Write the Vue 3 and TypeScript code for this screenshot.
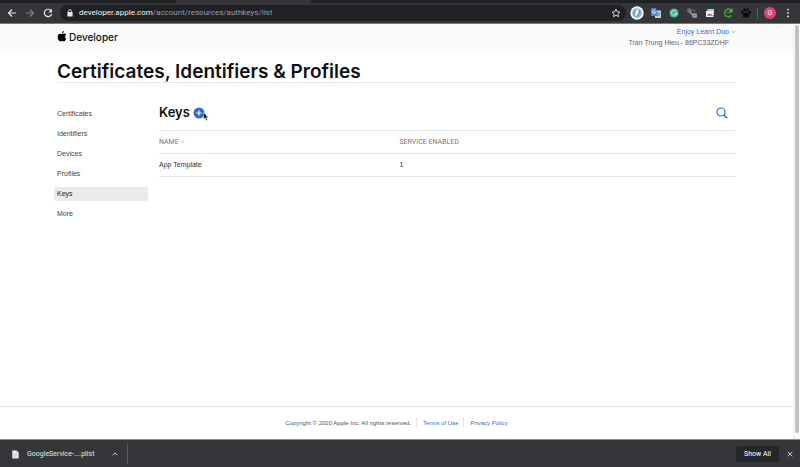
<script setup lang="ts">
interface KeyRow {
  name: string
  services: number
}

const sections: string[] = ['Certificates', 'Identifiers', 'Devices', 'Profiles', 'Keys', 'More']
const current = 'Keys'
const keys: KeyRow[] = [{ name: 'App Template', services: 1 }]
</script>

<template>
  <div class="window">
    <header class="chrome">
      <div class="tabs"><span class="tab"></span></div>
      <div class="toolbar">
        <button class="tool" type="button" aria-label="Back">
          <svg viewBox="0 0 10 10" width="10" height="10"><path d="M9 5H1.5M5 1.5L1.5 5L5 8.5" fill="none" stroke="#e4e5e7" stroke-width="1.2" /></svg>
        </button>
        <button class="tool" type="button" aria-label="Forward">
          <svg viewBox="0 0 10 10" width="10" height="10"><path d="M1 5H8.5M5 1.5L8.5 5L5 8.5" fill="none" stroke="#808287" stroke-width="1.1" /></svg>
        </button>
        <button class="tool" type="button" aria-label="Reload">
          <svg viewBox="0 0 10 10" width="10" height="10"><path d="M8.2 3A3.7 3.7 0 1 0 8.6 6" fill="none" stroke="#e4e5e7" stroke-width="1.2" /><path d="M9 .8V4.4H5.4Z" fill="#e4e5e7" /></svg>
        </button>
        <div class="address">
          <svg class="lock" viewBox="0 0 6 8" width="6" height="8"><rect x=".4" y="3" width="5.2" height="4.4" rx=".5" fill="#e8e9eb" /><path d="M1.5 3.2V2.2A1.5 1.5 0 0 1 4.5 2.2V3.2" fill="none" stroke="#e8e9eb" stroke-width=".8" /></svg>
          <span class="url"><span class="host">developer.apple.com</span>/account/resources/authkeys/list</span>
          <button class="star" type="button" aria-label="Bookmark this page">
            <svg viewBox="0 0 10 10" width="10" height="10"><path d="M5 1L6.1 3.8L9 4L6.8 5.9L7.5 8.8L5 7.2L2.5 8.8L3.2 5.9L1 4L3.9 3.8Z" fill="none" stroke="#dcdde0" stroke-width=".9" stroke-linejoin="round" /></svg>
          </button>
        </div>
        <div class="extensions">
          <button class="tool" type="button" aria-label="Compass extension">
            <svg viewBox="0 0 14 14" width="14" height="14"><circle cx="7" cy="7" r="6.7" fill="#f4f6f8" /><circle cx="7" cy="7" r="4.8" fill="#8fb6d6" /><path d="M8.4 3C5.8 3.6 6.4 6.4 4.8 9.6C7.4 9.6 8.6 7 8.4 3Z" fill="#fff" /><path d="M9.4 3.8C10.4 6.2 9.4 9 6.6 10.8" fill="none" stroke="#5a93c4" stroke-width="1" /><path d="M4.2 4.8C3.4 6.4 3.6 8.4 4.6 9.8" fill="none" stroke="#5a93c4" stroke-width=".8" /></svg>
          </button>
          <button class="tool" type="button" aria-label="Translate">
            <svg viewBox="0 0 12 12" width="12" height="12"><rect x="5" y="3.6" width="6" height="7.4" rx=".6" fill="#d3d6db" /><path d="M7 6H10.4M8.7 5V6M9.8 6C9.4 7.8 8.4 8.8 7.4 9.4M7.6 6.8L10 9.4" fill="none" stroke="#6b7079" stroke-width=".6" /><path d="M1.6 1H6L8 9H1.6A.6.6 0 0 1 1 8.4V1.6A.6.6 0 0 1 1.6 1Z" fill="#4b83dc" /><path d="M5.4 4A1.6 1.6 0 1 0 5.6 5.3H4.2" fill="none" stroke="#fff" stroke-width=".8" /></svg>
          </button>
          <button class="tool" type="button" aria-label="Writing assistant">
            <svg viewBox="0 0 12 12" width="12" height="12"><circle cx="6" cy="6" r="4.6" fill="#45b892" /><path d="M8 4.4A2.5 2.5 0 1 0 8.4 6.6H6.6M8.6 5.3V7.6" fill="none" stroke="#d4f5ea" stroke-width=".8" /></svg>
          </button>
          <button class="tool" type="button" aria-label="Link checker">
            <svg viewBox="0 0 12 12" width="12" height="12"><rect x="1.4" y="1.4" width="4" height="4.2" rx="1" fill="#74777b" /><path d="M3.6 4.6L7.4 8.6" stroke="#85888c" stroke-width="2" /><rect x="6.4" y="6.4" width="4.6" height="4.4" rx="1" fill="#a4a6a9" /><path d="M6 3.4H8.6V5.4" fill="none" stroke="#6a6d71" stroke-width="1" /><circle cx="3.2" cy="3.2" r=".8" fill="#467b57" /><path d="M7.8 8.6H9.6" stroke="#3a3b3f" stroke-width=".8" /></svg>
          </button>
          <button class="tool" type="button" aria-label="Screen capture">
            <svg viewBox="0 0 12 12" width="12" height="12"><path d="M3.4 2H10V8H3.4Z" fill="#c2c3c6" /><rect x="2" y="4" width="7.4" height="6" fill="#f1f1f2" /><path d="M3 8.8L5 6L6.4 7.6L7.4 6.8L8.6 8.8Z" fill="#c85258" /></svg>
          </button>
          <button class="tool" type="button" aria-label="Refresh extension">
            <svg viewBox="0 0 12 12" width="12" height="12"><path d="M9.2 3.4A3.8 3.8 0 1 0 9.4 8.4" fill="none" stroke="#3c9a3a" stroke-width="1.7" /><path d="M10.6 1V5.4H6.2L7.6 4Z" fill="#55b448" /><path d="M5 5.6H8.4" stroke="#3c9a3a" stroke-width="1" /></svg>
          </button>
          <button class="tool" type="button" aria-label="Paw extension">
            <svg viewBox="0 0 12 12" width="12" height="12" fill="#090a0b"><ellipse cx="2.4" cy="5.4" rx="1.2" ry="1.6" /><ellipse cx="4.6" cy="2.9" rx="1.2" ry="1.7" /><ellipse cx="7.5" cy="2.9" rx="1.2" ry="1.7" /><ellipse cx="9.8" cy="5.4" rx="1.2" ry="1.6" /><path d="M6 5.4C7.8 5.4 9.4 7.8 9.2 9.2C9 11 7.2 10.2 6 10.2S3 11 2.8 9.2C2.6 7.8 4.2 5.4 6 5.4Z" /></svg>
          </button>
        </div>
        <span class="divider"></span>
        <button class="avatar" type="button">G</button>
        <button class="tool menu" type="button" aria-label="Browser menu">
          <svg viewBox="0 0 4 10" width="4" height="10" fill="#e4e5e7"><circle cx="2" cy="1.6" r=".9" /><circle cx="2" cy="5" r=".9" /><circle cx="2" cy="8.4" r=".9" /></svg>
        </button>
      </div>
    </header>

    <div class="viewport">
      <div class="page">
        <div class="topbar">
          <a class="brand" href="#">
            <svg viewBox="0 0 24 30" width="10" height="12"><path d="M17 0C17 3 14.6 5.8 11.8 5.8C11.6 2.8 14 .2 17 0ZM22.4 19.2C21.2 22.4 18.8 26 16.4 26C14.8 26 14.2 25 12.2 25C10.2 25 9.4 26 8 26C5 26 1 19.8 1 14.4C1 9.4 4.2 6.6 7.6 6.6C9.6 6.6 11 7.8 12.2 7.8C13.4 7.8 15 6.4 17.4 6.4C18.6 6.4 21 6.9 22.6 9C18.4 11.6 19 17.2 22.4 19.2Z" fill="#000" /></svg>
            <span>Developer</span>
          </a>
          <div class="account">
            <button class="team" type="button">
              Enjoy Learn Duo
              <svg viewBox="0 0 5 4" width="5" height="4"><path d="M.6 1L2.5 2.8L4.4 1" fill="none" stroke="#6d9cca" stroke-width=".7" /></svg>
            </button>
            <span class="member">Tran Trung Hieu - 86PC33ZDHF</span>
          </div>
        </div>

        <h1 class="title">Certificates, Identifiers &amp; Profiles</h1>

        <div class="columns">
          <nav class="sidebar" aria-label="Resources">
            <a v-for="section in sections" :key="section" href="#" :class="{ active: section === current }">{{ section }}</a>
          </nav>
          <main class="content">
            <div class="heading">
              <h2>Keys</h2>
              <button class="add" type="button" aria-label="Register a new key">
                <svg viewBox="0 0 12 12" width="12" height="12"><circle cx="6" cy="6" r="5.5" fill="#2a70c8" /><path d="M6 3.4V8.6M3.4 6H8.6" stroke="#fff" stroke-width="1.2" /></svg>
                <svg class="pointer" viewBox="0 0 6 9" width="6" height="9"><path d="M.5 .4V7.2L2.1 5.8L3.2 8.4L4.4 7.9L3.3 5.4H5.4Z" fill="#111" stroke="#fff" stroke-width=".4" /></svg>
              </button>
              <button class="search" type="button" aria-label="Search keys">
                <svg viewBox="0 0 12 12" width="12" height="12"><circle cx="5" cy="5" r="4" fill="none" stroke="#2a70c8" stroke-width="1.2" /><path d="M8 8L11.2 11.2" stroke="#2a70c8" stroke-width="1.6" /></svg>
              </button>
            </div>
            <table>
              <thead>
                <tr>
                  <th scope="col">NAME <svg viewBox="0 0 5 4" width="5" height="4"><path d="M.6 1L2.5 2.8L4.4 1" fill="none" stroke="#999" stroke-width=".7" /></svg></th>
                  <th scope="col">SERVICE ENABLED</th>
                </tr>
              </thead>
              <tbody>
                <tr v-for="row in keys" :key="row.name">
                  <td>{{ row.name }}</td>
                  <td>{{ row.services }}</td>
                </tr>
              </tbody>
            </table>
          </main>
        </div>

        <footer class="legal">
          <span>Copyright © 2020 Apple Inc. All rights reserved.</span>
          <a href="#">Terms of Use</a>
          <a href="#">Privacy Policy</a>
        </footer>
      </div>
      <div class="scrollbar"><span class="thumb"></span></div>
    </div>

    <div class="downloads">
      <button class="file" type="button">
        <svg viewBox="0 0 7 9" width="7" height="9"><path d="M.3 .4H4.5L6.7 2.6V8.6H.3Z" fill="#eeeeef" /><path d="M4.4 .4V2.7H6.7M1.5 4.2H5.5M1.5 5.6H5.5M1.5 7H5.5" fill="none" stroke="#a8a9ac" stroke-width=".4" /></svg>
        <span>GoogleService-....plist</span>
      </button>
      <button class="tool expand" type="button" aria-label="Download options">
        <svg viewBox="0 0 6 4" width="6" height="4"><path d="M.6 3.3L3 .9L5.4 3.3" fill="none" stroke="#dcdde0" stroke-width=".9" /></svg>
      </button>
      <span class="rule"></span>
      <button class="show" type="button">Show All</button>
      <button class="tool" type="button" aria-label="Close downloads bar">
        <svg viewBox="0 0 6 6" width="6" height="6"><path d="M.7 .7L5.3 5.3M5.3 .7L.7 5.3" stroke="#dcdde0" stroke-width=".9" /></svg>
      </button>
    </div>
  </div>
</template>

<style>
body {
  margin: 0;
  background: #fff;
}
</style>

<style scoped>
* {
  box-sizing: border-box;
}
.window {
  display: flex;
  flex-direction: column;
  min-height: 100vh;
  font-family: Roboto, "Liberation Sans", sans-serif;
  font-size: 7px;
  line-height: 10px;
  color: #333;
}
button {
  display: flex;
  align-items: center;
  justify-content: center;
  padding: 0;
  border: 0;
  background: none;
  color: inherit;
  font: inherit;
}
svg {
  display: block;
  flex: none;
}
a {
  color: #2a70c8;
  text-decoration: none;
}
.chrome {
  background: #35363a;
  border-bottom: 1px solid #77787b;
}
.tabs {
  display: flex;
  height: 3px;
  padding-left: 175px;
  background: #202124;
}
.tab {
  width: 136px;
  background: #35363a;
  border-radius: 0 0 3px 3px;
}
.toolbar {
  display: flex;
  align-items: center;
  height: 20px;
  padding: 0 10px 0 7px;
  gap: 8px;
}
.address {
  display: flex;
  flex: 1;
  align-items: center;
  height: 16px;
  margin-left: -1px;
  padding: 0 5px 0 7px;
  border-radius: 8px;
  background: #202124;
}
.url {
  flex: 1;
  padding-left: 6px;
  color: #9a9ca0;
  font-size: 8px;
}
.host {
  color: #f1f2f3;
}
.extensions {
  display: flex;
  align-items: center;
  gap: 6px;
  margin-left: -4px;
}
.divider {
  width: 1px;
  height: 11px;
  margin: 0 -2px 0 -3px;
  background: #5a5b60;
}
.avatar {
  width: 12px;
  height: 12px;
  border-radius: 50%;
  background: #dc4677;
  color: #fbe6ee;
}
.menu {
  margin-left: 2px;
}
.viewport {
  display: flex;
  flex: 1;
}
.page {
  display: flex;
  flex: 1;
  flex-direction: column;
  font-family: "Liberation Sans", Arial, sans-serif;
}
.topbar {
  display: flex;
  justify-content: space-between;
  padding: 2px 57px 3px;
  background: #fafafa;
}
.brand {
  display: flex;
  align-items: center;
  gap: 2px;
  color: #111;
  font-family: Inter, "Liberation Sans", sans-serif;
  font-size: 10px;
  font-weight: 500;
}
.account {
  display: flex;
  flex-direction: column;
  align-items: flex-end;
  line-height: 11px;
}
.team {
  gap: 2px;
  color: #2a70c8;
}
.member {
  padding-right: 7px;
  color: #666;
}
.title {
  margin: 10px 57px 0;
  border-bottom: 1px solid #e8e8e8;
  color: #111;
  font-family: Inter, "Liberation Sans", sans-serif;
  font-size: 19px;
  font-weight: 600;
  line-height: 21px;
}
.columns {
  display: flex;
  flex: 1;
  gap: 11px;
  padding: 21px 57px 24px 54px;
}
.sidebar {
  display: flex;
  flex-direction: column;
  gap: 6px;
  width: 94px;
  padding-top: 3px;
}
.sidebar a {
  padding: 2px 3px;
  border-radius: 2px;
  color: #444;
}
.sidebar a.active {
  background: #ebebeb;
  color: #222;
}
.content {
  flex: 1;
}
.heading {
  display: flex;
  align-items: center;
  gap: 3px;
  padding-bottom: 9px;
}
h2 {
  margin: 0;
  color: #111;
  font-family: Inter, "Liberation Sans", sans-serif;
  font-size: 13px;
  font-weight: 600;
  line-height: 17px;
}
.add {
  position: relative;
}
.pointer {
  position: absolute;
  top: 5px;
  left: 10px;
}
.search {
  margin-left: auto;
  margin-right: 8px;
}
table {
  width: 100%;
  border-collapse: collapse;
  table-layout: fixed;
  border-top: 1px solid #e8e8e8;
}
th,
td {
  padding: 6px 0;
  border-bottom: 1px solid #e8e8e8;
  text-align: left;
}
th {
  color: #777;
  font-family: Roboto, "Liberation Sans", sans-serif;
  font-weight: 400;
}
th:first-child {
  width: calc(100% * 5 / 12);
}
th svg {
  display: inline-block;
}
.legal {
  display: flex;
  align-items: center;
  justify-content: center;
  height: 33px;
  border-top: 1px solid #e8e8e8;
  font-size: 6px;
  color: #555;
}
.legal a {
  margin-left: 5px;
  padding-left: 6px;
  border-left: 1px solid #e4e4e4;
}
.scrollbar {
  display: flex;
  width: 7px;
  padding: 1px 1px 6px;
  background: #fafafa;
  border-left: 1px solid #ececec;
}
.thumb {
  flex: 1;
  border-radius: 3px;
  background: #c1c1c1;
}
.downloads {
  display: flex;
  align-items: center;
  height: 28px;
  padding: 1px 7px 0 12px;
  border-top: 1px solid #8b8c8f;
  background: #35363a;
  color: #e8e9eb;
}
.file {
  gap: 8px;
}
.expand {
  margin-left: 18px;
}
.rule {
  width: 1px;
  height: 20px;
  margin-left: 9px;
  background: #56575b;
}
.show {
  height: 16px;
  margin: 0 8px 0 auto;
  padding: 0 8px;
  border-radius: 2px;
  background: #26272b;
  color: #fff;
}
</style>
